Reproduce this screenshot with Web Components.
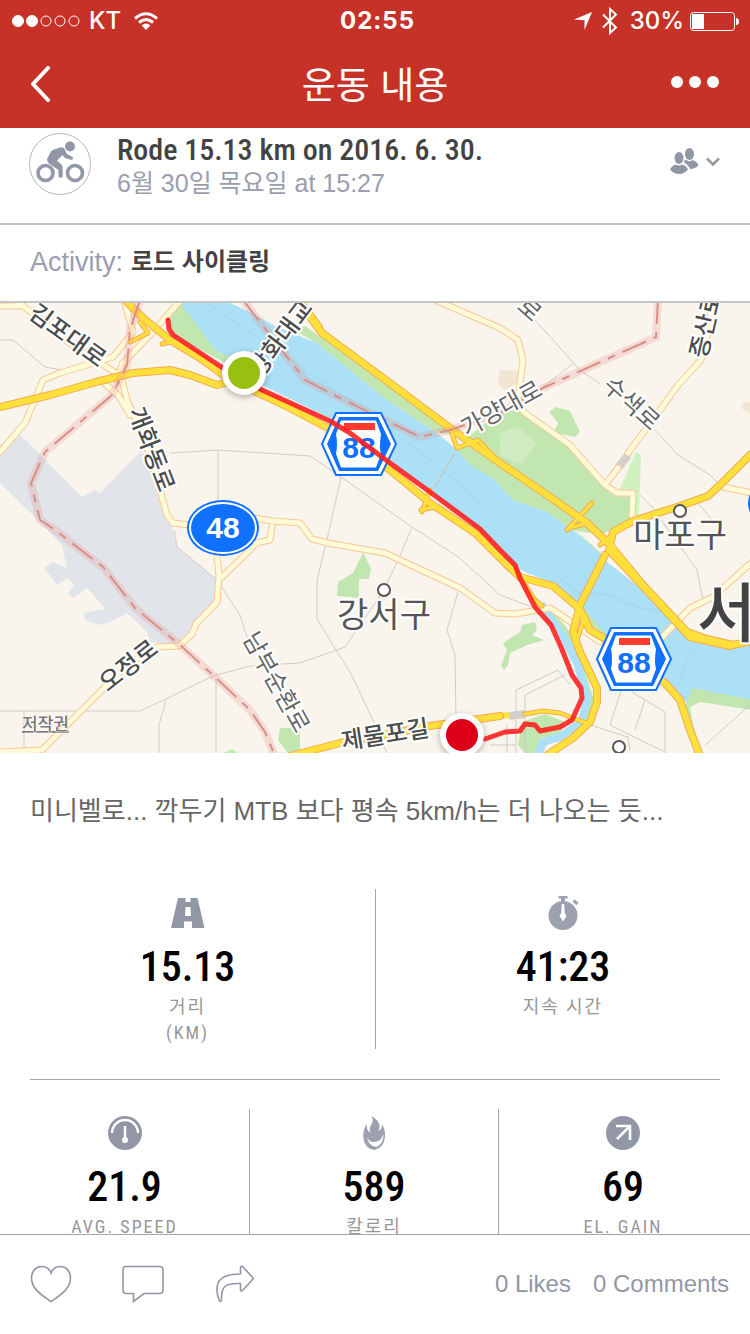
<!DOCTYPE html>
<html lang="ko">
<head>
<meta charset="utf-8">
<meta name="viewport" content="width=device-width, initial-scale=1">
<title>운동 내용</title>
<style>
  html, body { margin: 0; height: 100%; }
  body {
    --red: #c63227;
    --slate: #9297a6;
    --rule: #a6a6a6;
    --sans: "Liberation Sans", "Noto Sans CJK KR", sans-serif;
    --narrow: "Roboto Condensed", "Liberation Sans Narrow", "Noto Sans CJK KR", sans-serif;
    font-family: var(--sans);
    background: #fff;
    color: #434343;
  }
</style>
</head>
<body>
<workout-app></workout-app>

<template id="t-app">
  <style>
    :host { display: flex; flex-direction: column; height: 100vh; }
    main { flex: 1; min-height: 0; overflow-y: auto; scrollbar-width: none; }
    .note { margin: 0; padding: 38px 30px 58px; font-size: 26px; line-height: 40px; color: #666; }
    .row { display: grid; grid-auto-flow: column; grid-auto-columns: 1fr; }
    .row.three { padding-right: 3px; }
    .row stat-cell + stat-cell { border-left: 1px solid var(--rule); }
    hr { margin: 30px 30px 29px; border: 0; border-top: 1px solid var(--rule); }
  </style>
  <status-bar></status-bar>
  <nav-bar>운동 내용</nav-bar>
  <main>
    <workout-head>
      Rode 15.13 km on 2016. 6. 30.
      <span slot="when">6월 30일 목요일 at 15:27</span>
    </workout-head>
    <activity-line><span slot="label">Activity:</span> 로드 사이클링</activity-line>
    <route-map></route-map>
    <p class="note">미니벨로... 깍두기 MTB 보다 평속 5km/h는 더 나오는 듯...</p>
    <div class="row">
      <stat-cell icon="road" value="15.13"><div>거리</div><div>(KM)</div></stat-cell>
      <stat-cell icon="watch" value="41:23">지속 시간</stat-cell>
    </div>
    <hr>
    <div class="row three">
      <stat-cell icon="gauge" value="21.9">AVG. SPEED</stat-cell>
      <stat-cell icon="flame" value="589">칼로리</stat-cell>
      <stat-cell icon="climb" value="69">EL. GAIN</stat-cell>
    </div>
  </main>
  <action-bar>
    <a slot="count" href="#likes">0 Likes</a>
    <a slot="count" href="#comments">0 Comments</a>
  </action-bar>
</template>

<template id="t-status">
  <style>
    :host { display: grid; grid-template-columns: 1fr auto 1fr; align-items: center; box-sizing: border-box; height: 40px; padding: 2px 11px 0 12px; background: var(--red); color: #fff; font: 500 24px/38px Inter, sans-serif; }
    div { display: flex; align-items: center; }
    .left { gap: 9px; }
    .left svg:last-child { margin-left: 4px; }
    .right { justify-content: flex-end; gap: 6px; }
    .right svg:nth-child(2) { margin: 0 6px 0 4px; }
    b { padding-left: 4px; font-weight: 700; letter-spacing: 1px; }
    svg { display: block; }
  </style>
  <div class="left">
    <svg width="68" height="12" viewBox="0 0 68 12" fill="none" stroke="#fff">
      <circle cx="6" cy="6" r="5.5" fill="#fff"/><circle cx="20" cy="6" r="5.5" fill="#fff"/>
      <circle cx="34" cy="6" r="5"/><circle cx="48" cy="6" r="5"/><circle cx="62" cy="6" r="5"/>
    </svg>
    <span>KT</span>
    <svg width="24" height="18" viewBox="0 0 24 18" fill="none" stroke="#fff" stroke-width="3">
      <path d="M1 6.5Q12 -3 23 6.5M5 10.5Q12 4.5 19 10.5"/><path d="M12 18L7.6 13.4Q12 9.8 16.4 13.4Z" fill="#fff" stroke="none"/>
    </svg>
  </div>
  <b>02:55</b>
  <div class="right">
    <svg width="18" height="18" viewBox="0 0 18 18" fill="#fff"><path d="M18 0L10.5 18V8.2L0 7.4Z"/></svg>
    <svg width="16" height="28" viewBox="0 0 16 28" fill="none" stroke="#fff" stroke-width="2"><path d="M1 7.5L14 20.5L8 26V2L14 7.5L1 20.5"/></svg>
    <span>30%</span>
    <svg width="49" height="19" viewBox="0 0 49 19"><rect x=".5" y=".5" width="44" height="18" rx="3" fill="none" stroke="#fff"/><path d="M2 2H14V17H2ZM46 6Q49 6 49 9.500T46 13Z" fill="#fff"/></svg>
  </div>
</template>

<template id="t-nav">
  <style>
    :host { display: grid; grid-template-columns: 1fr auto 1fr; align-items: center; height: 88px; padding: 0 30px; background: var(--red); color: #fff; }
    h1 { margin: 0; padding-top: 6px; font-size: 37px; line-height: 48px; font-weight: 400; }
    button { border: 0; padding: 0; background: none; display: block; }
    button:last-child { justify-self: end; }
    svg { display: block; }
  </style>
  <button aria-label="Back"><svg width="20" height="36" viewBox="0 0 20 36" fill="none" stroke="#fff" stroke-width="4" stroke-linecap="round" stroke-linejoin="round"><path d="M18 2L3 18L18 34"/></svg></button>
  <h1><slot></slot></h1>
  <button aria-label="More"><svg width="50" height="16" viewBox="0 0 50 16" fill="#fff"><circle cx="7" cy="6" r="6"/><circle cx="25" cy="6" r="6"/><circle cx="43" cy="6" r="6"/></svg></button>
</template>

<template id="t-head">
  <style>
    :host { display: flex; align-items: flex-start; gap: 26px; padding: 5px 30px 24px 29px; border-bottom: 2px solid #c4c4c4; }
    .text { flex: 1; }
    h2 { margin: 0; font: 500 30px/34px var(--narrow); color: #434343; }
    p { margin: 0; font-size: 25px; line-height: 32px; color: #9a9eae; }
    button { display: flex; align-items: center; gap: 7px; margin-top: 15px; border: 0; padding: 0; background: none; }
    svg { display: block; }
  </style>
  <svg width="62" height="64" viewBox="0 0 62 64">
    <circle cx="31" cy="31" r="30.500" fill="none" stroke="#b4b7c1"/>
    <g fill="none" stroke="#9297a6">
      <circle cx="16.500" cy="40" r="7.500" stroke-width="3.600"/><circle cx="46" cy="40" r="7.500" stroke-width="3.600"/>
    </g>
    <circle cx="41" cy="13.500" r="5" fill="#9297a6"/>
    <path d="M18 26L22 18.500Q23 17 25 16.500L32 14.200Q34.500 13.800 35.600 16L38 21L43.600 24Q44.800 25.800 43 27L36.500 25.200Q35 24.500 33.500 22L28 27.500L32.500 31.500Q33.800 33 33.700 35V43.500Q31.800 46 29.500 43.500V37L22 32Q18 29.500 18 26Z" fill="#9297a6"/>
  </svg>
  <div class="text">
    <h2><slot></slot></h2>
    <p><slot name="when"></slot></p>
  </div>
  <button aria-label="Shared with friends">
    <svg width="29" height="27" viewBox="0 0 29 27" fill="#9297a6">
      <ellipse cx="9" cy="10" rx="4.500" ry="6"/><ellipse cx="19.500" cy="6" rx="4.500" ry="6"/>
      <path d="M0 21.500Q2 17.500 5.500 16.500Q9 18.500 12.500 16.500Q16 17.500 18 21.500Q14 26 9 26T0 21.500Z"/>
      <path d="M14 12.500L16.500 12Q19.500 14.500 22.500 12Q27 13.500 28.500 17Q25.500 21 20 21Q19 17.500 14.500 15Z"/>
    </svg>
    <svg width="14" height="10" viewBox="0 0 14 10" fill="none" stroke="#999" stroke-width="2.600"><path d="M1 1.500L7 7.500L13 1.500"/></svg>
  </button>
</template>

<template id="t-activity">
  <style>
    :host { display: flex; align-items: center; gap: 8px; padding: 17px 30px 19px; border-bottom: 2px solid #c4c4c4; font-size: 24px; line-height: 40px; font-weight: 700; color: #434343; }
    span { font-weight: 400; font-size: 27px; color: #9a9eae; }
  </style>
  <span><slot name="label"></slot></span><div><slot></slot></div>
</template>

<template id="t-map">
  <style>
    :host { display: block; }
    svg { display: block; width: 100%; aspect-ratio: 5 / 3; }
    text { font-family: "Noto Sans CJK KR", sans-serif; font-weight: 500; font-size: 24px; fill: #4d4d4d; stroke: #fff; stroke-width: 4px; stroke-linejoin: round; paint-order: stroke; text-anchor: middle; }
    .lite { fill: #646464; font-weight: 400; }
    .town { font-size: 34px; fill: #555; font-weight: 400; }
    .city { font-size: 64px; fill: #434343; text-anchor: start; }
    .num { font-family: "Liberation Sans", sans-serif; font-weight: 700; font-size: 30px; stroke: none; fill: #1070ff; }
    .num.w { fill: #fff; }
    .legal { font-size: 17px; fill: #777; stroke-width: 1px; text-anchor: start; text-decoration: underline; }
    .y use, .l use { fill: none; stroke-linejoin: round; stroke-linecap: round; }
  </style>
  <svg viewBox="0 303 750 450" preserveAspectRatio="xMidYMid slice" role="img" aria-label="Route map">
    <defs>
      <path id="hw" d="M0 407L50 395L100 381L133 373L170 370L190 375L217 385L250 376M125 300L143 318L170 340L200 358L222 374L250 389L290 408L330 429L390 470L430 503L475 533L505 563L520 577L553 586L580 609L590 630L607 640L665 683L680 700L690 730L700 756M307 313L322 333L383 378L450 428L500 463L550 497L587 523L610 545L643 585L687 632L707 639L733 645L752 641M750 455L720 485L708 496L680 506L633 521L613 532L609 550L640 583L690 637L730 646M605 555L580 605L573 632L580 652L597 688L597 702L590 722L573 738L547 755M290 756L340 743L430 726L500 716"/>
      <path id="hw2" d="M525 714L543 711L560 713L575 719L590 724M580 605L584 618L577 640M520 577L535 600L542 606M450 428L457 448L478 440L500 463M422 512L430 490M421 510L435 507M567 530L592 503M570 528L587 523M620 528L600 545M130 342L148 333L140 322M162 344L174 341M303 303L320 326M82 385L98 380"/>
      <path id="rd" d="M15 300L45 323L72 345L105 366L121 376L127 400L145 440L160 490L167 515L173 523L190 525M104 383L118 395L130 415M217 556L219 575L217 602L196 624L192 634L179 646L157 647L130 663L105 687L42 750L0 752M222 577L250 550L256 543L270 540L272 526M255 518L272 521L300 523L312 539L328 543L385 553L460 588L495 613L515 614L550 608L580 628L600 642M0 452L25 423L43 380L60 373L113 357L133 332L124 300M181 300L150 335L122 364L118 380M435 300L500 328L518 340L523 360L520 383L518 405L525 413L570 445L605 485L617 493L633 493L632 517M605 485L618 468M628 453L660 410L678 385L701 360L707 337L713 300M752 562L713 597L690 608L655 645M723 487L752 493M0 306L20 306"/>
      <path id="bd" d="M140 300L130 330L127 365L112 395L45 452L31 483L40 520L55 530L103 567L135 608L180 645L215 677L250 710L265 732L275 756M243 300L270 335L305 380L340 398L385 420L420 437L450 430L500 413L545 387L656 337L658 300"/>
      <g id="shield">
        <path d="M-23 -31H22L37 0L22 31H-23L-37 0Z" fill="#fff" stroke="#1070ff" stroke-width="2" stroke-linejoin="round"/>
        <path d="M-20 -27H19L32 0L19 27H-20L-32 0Z" fill="#1070ff"/>
        <path d="M-18 -23.500H17L22 -10Q20 3 22 10L17 23.500H-18L-23 10Q-21 0 -23 -10Z" fill="#fff"/>
        <path d="M-15 -21H16V-14H-15Z" fill="#ff3b30"/>
      </g>
    </defs>
    <rect y="303" width="750" height="450" fill="#f9f5ed"/>
    <g fill="#e1e5ea"><path d="M0 445L20 434L82 497L95 490L100 493L140 452L148 456L160 493L170 520L177 547L217 580L217 602L193 632L180 645L150 642L147 632L127 613L115 620L100 625L85 620L84 613L106 609L87 588L73 598L68 593L74 585L68 578L57 585L44 568L53 562L67 568L62 545L43 525L0 483Z"/></g>
    <path d="M500 370L520 371V381L505 390L498 384ZM742 403L752 402V415L743 410Z" fill="#f1e6d3"/>
    <path d="M178 303H230L250 312L277 327L317 343L350 370L383 397L437 433L457 450L483 467L500 485L513 500L547 512L573 530L600 552L607 562L643 590L677 627L693 642L727 649L752 644V702L692 690L687 703L670 684L607 637L590 617L580 605L553 583L527 573L517 568L500 548L470 522L430 492L400 468L340 423L262 385L227 357L210 347Z" fill="#abe0f6"/>
    <g fill="none" stroke="#9fd6ef"><path d="M207 303Q260 340 320 380T430 460T530 550T590 595T620 600T660 610T690 640"/><path d="M680 683L686 660L700 645"/></g>
    <g fill="#c1e6b0">
      <path d="M180 303L168 320L173 335L235 368L262 385L240 362L215 350L197 325Z"/>
      <path d="M293 330L317 343L350 370L383 397L437 433L452 434L383 382L322 338L305 326Z"/>
      <path d="M473 433L500 412L522 410L570 446L603 487L615 496L632 497V520L600 535L573 530L547 512L513 500L495 480L470 465L457 450Z"/>
      <path d="M549 412L556 407L570 411L580 432L575 437L560 434L553 435L558 423Z"/>
      <path d="M363 553L371 568L369 579H359V598L337 596L338 582L353 573Z"/>
      <path d="M503 643L520 632L522 625L535 622L537 630L532 635L544 640L527 645L510 653L508 665L504 670L501 665L507 651Z"/>
      <path d="M692 688L752 700V710L700 702L690 707L693 725L702 753H696L684 710Z"/>
      <path d="M280 728H300V753H288L278 740Z"/><path d="M226 752L232 749L238 753H224Z"/>
      <path d="M518 745L522 722L545 714L565 722L560 734L540 738L535 753H525Z"/>
      <path d="M548 604L570 632L583 665L594 700L585 728L570 738L585 720L588 700L574 665Z"/>
      <path d="M583 607L606 635L590 625Z"/><path d="M570 525L605 560L595 548Z"/>
    </g>
    <path d="M500 433L517 426L537 443L522 464L500 457Z" fill="#d0ebbf"/>
    <path d="M636 452L641 455L639 515L633 515V493L618 493Z" fill="#d0f2c0"/>
    <path d="M541 604L562 634L578 665L587 698L582 722L560 737L543 742L538 756" fill="none" stroke="#abe0f6" stroke-width="8"/>
    <g fill="none" stroke="#cfccc6">
      <path d="M0 340H13L45 367L62 370M170 453L218 450L310 456L341 477L412 527L460 558L500 595L540 610M218 450V500M341 477L328 535L317 580V619L336 650L350 672L373 720L387 753M412 527L400 556L384 590L345 647L300 663L250 666L213 676L170 697L140 711H0M174 530L177 547L217 580L240 615L248 640M458 592L447 630L455 655L456 720M166 700L159 725V753M216 678V753M24 711V748M535 320L580 370L600 384M655 430L678 455L710 475L722 487M640 495L655 510L668 530M665 525L697 570L703 600M698 503L712 520M535 393L574 363M516 753V690L558 670L570 685M525 753V695L565 675M622 688L610 725L665 752M645 700L635 730M632 692L665 712V753M590 725L628 737L630 750M500 732H520M490 745H515M507 725V753M705 745L750 705"/>
    </g>
    <path d="M618 468L628 455M509 716L525 714" stroke="#d3d0ca" stroke-width="8"/>
    <path d="M500 716L509 715" stroke="#ffe03a" stroke-width="6"/>
    <g class="l"><use href="#rd" stroke="#f8c896" stroke-width="7"/><use href="#rd" stroke="#fffad8" stroke-width="5"/></g>
    <g class="y">
      <use href="#hw2" stroke="#f5ab50" stroke-width="5"/><use href="#hw" stroke="#f5ab50" stroke-width="8"/>
      <use href="#hw2" stroke="#ffdf3b" stroke-width="3"/><use href="#hw" stroke="#ffdf3b" stroke-width="6"/>
    </g>
    <path d="M455 453L435 487" stroke="#d8b9a2"/>
    <g fill="none"><use href="#bd" stroke="#e78f88" stroke-opacity=".25" stroke-width="8"/><use href="#bd" stroke="#d98f87" stroke-width="2" stroke-dasharray="26 8 8 8"/></g>

    <text transform="translate(68 335) rotate(36)" y="9">김포대로</text>
    <text transform="translate(152 449) rotate(69)" y="9">개화동로</text>
    <text transform="translate(280 338) rotate(-53)" y="9">방화대교</text>
    <text class="lite" transform="translate(501 408) rotate(-29)" y="9">가양대로</text>
    <text class="lite" transform="translate(632 403) rotate(42)" y="9">수색로</text>
    <text class="lite" transform="translate(530 309) rotate(42)" y="9">로</text>
    <text transform="translate(705 325) rotate(-77)" y="9">증산로</text>
    <text class="lite" transform="translate(277 682) rotate(61)" y="9">남부순환로</text>
    <text transform="translate(128 665) rotate(-38)" y="9">오정로</text>
    <text transform="translate(385 734) rotate(-9)" y="9">제물포길</text>
    <text class="town" x="384" y="627">강서구</text>
    <text class="town" x="680" y="547">마포구</text>
    <text class="city" x="697" y="636">서울</text>
    <a href="#legal"><text class="legal" x="22" y="730">저작권</text></a>
    <g fill="#fff" stroke="#555" stroke-width="2"><circle cx="384" cy="590" r="6"/><circle cx="680" cy="511" r="6"/><circle cx="619" cy="747" r="6"/></g>

    <ellipse cx="223" cy="528" rx="36" ry="28" fill="#1070ff"/><ellipse cx="223" cy="528" rx="33" ry="25" fill="#1070ff" stroke="#fff" stroke-width="2"/>
    <text class="num w" x="223" y="538">48</text>
    <ellipse cx="784" cy="503" rx="36" ry="28" fill="#1070ff"/>
    <use href="#shield" x="359" y="444"/><text class="num" x="359" y="458">88</text>
    <use href="#shield" x="634" y="659"/><text class="num" x="634" y="673">88</text>

    <path d="M168 320L169 329L173 335L223 368L262 390L330 421L350 433L390 463L430 492L480 529L500 550L515 565L520 578L535 607L551 625L561 647L572 675L581 688L582 698L572 720L560 727L540 731L535 725L525 724L520 731L505 732L485 739" fill="none" stroke="#ff1a1a" stroke-opacity=".87" stroke-width="5" stroke-linejoin="round" stroke-linecap="round"/>
    <g style="filter: drop-shadow(0 2px 3px rgba(0,0,0,.3))"><circle cx="244" cy="373" r="22" fill="#fff"/><circle cx="462" cy="735" r="22" fill="#fff"/></g>
    <circle cx="244" cy="373" r="16" fill="#97c011"/><circle cx="462" cy="735" r="16" fill="#dd0019"/>
  </svg>
</template>

<template id="t-stat">
  <style>
    :host { display: flex; flex-direction: column; align-items: center; padding: 6px 0 3px; }
    svg { display: block; }
    strong { margin: 12px 0 3px; font: 500 42px/48px var(--narrow); color: #000; }
    .label { font: 400 18px/26px var(--narrow); letter-spacing: 2px; color: #979797; text-align: center; }
  </style>
  <svg width="36" height="36" viewBox="0 0 36 36" aria-hidden="true"></svg>
  <strong></strong>
  <div class="label"><slot></slot></div>
</template>

<template id="t-actions">
  <style>
    :host { display: flex; align-items: center; justify-content: space-between; box-sizing: border-box; height: 100px; padding: 0 21px 2px 30px; border-top: 1px solid var(--rule); background: #fff; }
    div { display: flex; align-items: center; }
    .buttons { gap: 50px; }
    .counts { gap: 22px; font-size: 24px; line-height: 32px; }
    button { border: 0; padding: 0; background: none; display: block; }
    svg { display: block; }
    ::slotted(a) { color: #9297a6; text-decoration: none; }
  </style>
  <div class="buttons">
    <button aria-label="Like"><svg width="42" height="38" viewBox="0 0 42 38" fill="none" stroke="#9297a6" stroke-width="1.600"><path d="M21 36.500C13 31 1.500 24.500 1.500 13C1.500 6 6 1.500 11.500 1.500C16 1.500 19.500 4 21 8C22.500 4 26 1.500 30.500 1.500C36 1.500 40.500 6 40.500 13C40.500 24.500 29 31 21 36.500Z"/></svg></button>
    <button aria-label="Comment"><svg width="43" height="38" viewBox="1 0 43 38" fill="none" stroke="#9297a6" stroke-width="1.600"><path d="M4.500 1.500H39Q42 1.500 42 4.500V25.500Q42 28.500 39 28.500H23L12.500 36.500V28.500H4.500Q2 28.500 2 25.500V4.500Q2 1.500 4.500 1.500Z"/></svg></button>
    <button aria-label="Share"><svg width="40" height="38" viewBox="0 0 40 38" fill="none" stroke="#9297a6" stroke-width="1.600" stroke-linejoin="round"><path d="M25.500 9V2.500Q26 .5 28 2L38.500 13.500L28 25Q26 27 25.500 25V18.500Q14 18 10 21.500Q6 25 6.500 35.500Q5.500 37.500 4.200 35.500Q0 24 3.500 17Q8 9 25.500 9Z"/></svg></button>
  </div>
  <div class="counts"><slot name="count"></slot></div>
</template>

<script>
  class Base extends HTMLElement {
    constructor() {
      super();
      const template = document.getElementById(this.constructor.template);
      this.attachShadow({ mode: "open" }).append(template.content.cloneNode(true));
    }
  }

  const ICONS = {
    road: '<path fill="#9297a6" d="M8 3H15.500V7H20.500V3H27.500L34.500 33H22V26.500H14V33H1ZM15.500 12L15 21H21L20.500 12Z" fill-rule="evenodd"/>',
    watch: '<g fill="#9da1af"><circle cx="18" cy="20.500" r="14.500"/><path d="M13.500 1H22.500V3.500H20V7H16V3.500H13.500Z"/></g><path d="M28.500 5.500L32.500 9" stroke="#9da1af" stroke-width="3"/><path d="M16.800 9H19.200L19.800 18L21.500 21L18 26.500L14.500 21L16.200 18Z" fill="#fff"/>',
    gauge: '<circle cx="18" cy="18" r="17" fill="#9297a6"/><path d="M5 18A13 13 0 0 1 31 18M18 11V24" fill="none" stroke="#fff" stroke-width="2.400"/><circle cx="18" cy="25" r="3" fill="#fff"/>',
    flame: '<path fill="#9da1af" d="M15.500 1Q23.500 5.500 23.500 11.500Q23.500 14 22.500 16Q26 14.500 26 9.500Q29.500 14 29 22.500Q27.500 33 18.500 35Q9 33.500 7.500 24Q6.500 15 10.500 9Q10.500 16 14.500 17.500Q12.500 13.500 15.500 9.500Q18 5.500 15.500 1Z"/><path fill="#fff" d="M11 22Q13 27.500 18.500 27Q25.500 26.500 27.500 19Q28 28 20.500 32Q12.500 31 11 22Z"/>',
    climb: '<circle cx="18" cy="18" r="17" fill="#9297a6"/><path d="M11 11H25V25M25 11L12 24" fill="none" stroke="#fff" stroke-width="2.600"/>'
  };

  customElements.define("status-bar", class extends Base { static template = "t-status"; });
  customElements.define("nav-bar", class extends Base { static template = "t-nav"; });
  customElements.define("workout-head", class extends Base { static template = "t-head"; });
  customElements.define("activity-line", class extends Base { static template = "t-activity"; });
  customElements.define("route-map", class extends Base { static template = "t-map"; });
  customElements.define("action-bar", class extends Base { static template = "t-actions"; });
  customElements.define("stat-cell", class extends Base {
    static template = "t-stat";
    connectedCallback() {
      this.shadowRoot.querySelector("svg").innerHTML = ICONS[this.getAttribute("icon")];
      this.shadowRoot.querySelector("strong").textContent = this.getAttribute("value");
    }
  });
  customElements.define("workout-app", class extends Base { static template = "t-app"; });
</script>
</body>
</html>
